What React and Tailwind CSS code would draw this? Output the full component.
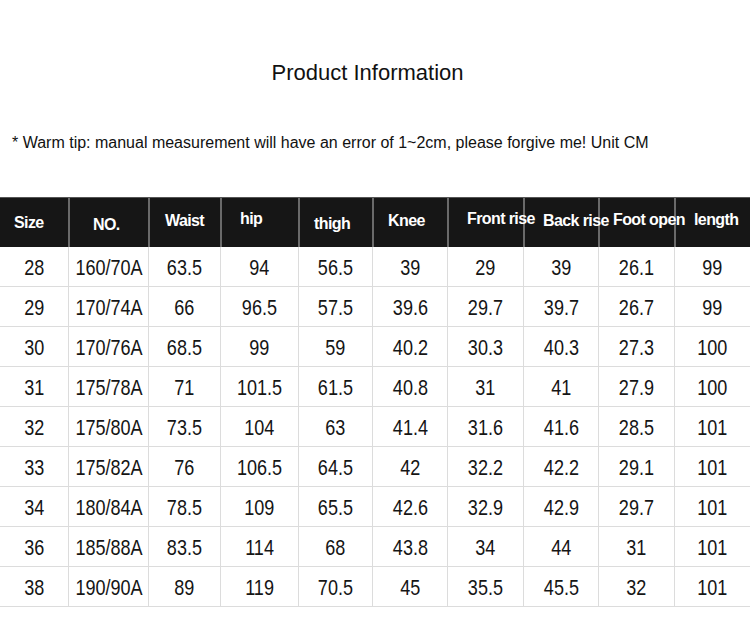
import React from "react";

const cols = [
  { key: "size", label: "Size", w: "w-[68px]", pl: "pl-[14px]", pt: "pt-[13px]" },
  { key: "no", label: "NO.", w: "w-[80px]", pl: "pl-[23px]", pt: "pt-[15px]" },
  { key: "waist", label: "Waist", w: "w-[72px]", pl: "pl-[15px]", pt: "pt-[11px]" },
  { key: "hip", label: "hip", w: "w-[78px]", pl: "pl-[18px]", pt: "pt-[9px]" },
  { key: "thigh", label: "thigh", w: "w-[74px]", pl: "pl-[14px]", pt: "pt-[14px]" },
  { key: "knee", label: "Knee", w: "w-[75px]", pl: "pl-[14px]", pt: "pt-[11px]" },
  { key: "front", label: "Front rise", w: "w-[76px]", pl: "pl-[18px]", pt: "pt-[9px]" },
  { key: "back", label: "Back rise", w: "w-[75px]", pl: "pl-[18px]", pt: "pt-[11px]" },
  { key: "foot", label: "Foot open", w: "w-[76px]", pl: "pl-[13px]", pt: "pt-[10px]" },
  { key: "length", label: "length", w: "w-[76px]", pl: "pl-[18px]", pt: "pt-[10px]" },
];

const rows = [
  ["28", "160/70A", "63.5", "94", "56.5", "39", "29", "39", "26.1", "99"],
  ["29", "170/74A", "66", "96.5", "57.5", "39.6", "29.7", "39.7", "26.7", "99"],
  ["30", "170/76A", "68.5", "99", "59", "40.2", "30.3", "40.3", "27.3", "100"],
  ["31", "175/78A", "71", "101.5", "61.5", "40.8", "31", "41", "27.9", "100"],
  ["32", "175/80A", "73.5", "104", "63", "41.4", "31.6", "41.6", "28.5", "101"],
  ["33", "175/82A", "76", "106.5", "64.5", "42", "32.2", "42.2", "29.1", "101"],
  ["34", "180/84A", "78.5", "109", "65.5", "42.6", "32.9", "42.9", "29.7", "101"],
  ["36", "185/88A", "83.5", "114", "68", "43.8", "34", "44", "31", "101"],
  ["38", "190/90A", "89", "119", "70.5", "45", "35.5", "45.5", "32", "101"],
];

const sans = "font-['Liberation_Sans',Arial,sans-serif]";

export default function App() {
  return (
    <div className={`w-[750px] h-[627px] bg-white overflow-hidden ${sans}`}>
      <div className="pt-[60px] pr-[15px] h-[86px] text-center text-[22px] leading-[26px] text-[#111]">
        Product Information
      </div>
      <div className="mt-[48px] pl-[12px] text-[16px] leading-[18px] text-[#111]">
        * Warm tip: manual measurement will have an error of 1~2cm, please forgive me! Unit CM
      </div>

      <div className="mt-[45px]">
        <div className="flex h-[50px] bg-[#161616] border-t border-[#555]">
          {cols.map((c, i) => (
            <div
              key={c.key}
              className={`${c.w} ${c.pl} ${c.pt} shrink-0 whitespace-nowrap ${
                i > 0 ? "border-l-2 border-[#6a6a6a]" : ""
              }`}
            >
              <span className="relative z-10 font-bold text-white text-[16px] leading-[20px] tracking-[-0.6px]">
                {c.label}
              </span>
            </div>
          ))}
        </div>

        {rows.map((r) => (
          <div key={r[0]} className="flex h-10 border-b border-[#dcdcdc]">
            {r.map((v, i) => (
              <div
                key={cols[i].key}
                className={`${cols[i].w} shrink-0 flex items-center justify-center pt-[2px] ${
                  i > 0 ? "border-l border-[#dcdcdc]" : ""
                }`}
              >
                <span className="inline-block scale-x-[0.82] text-[22px] leading-[26px] text-[#151515]">{v}</span>
              </div>
            ))}
          </div>
        ))}
      </div>
    </div>
  );
}
